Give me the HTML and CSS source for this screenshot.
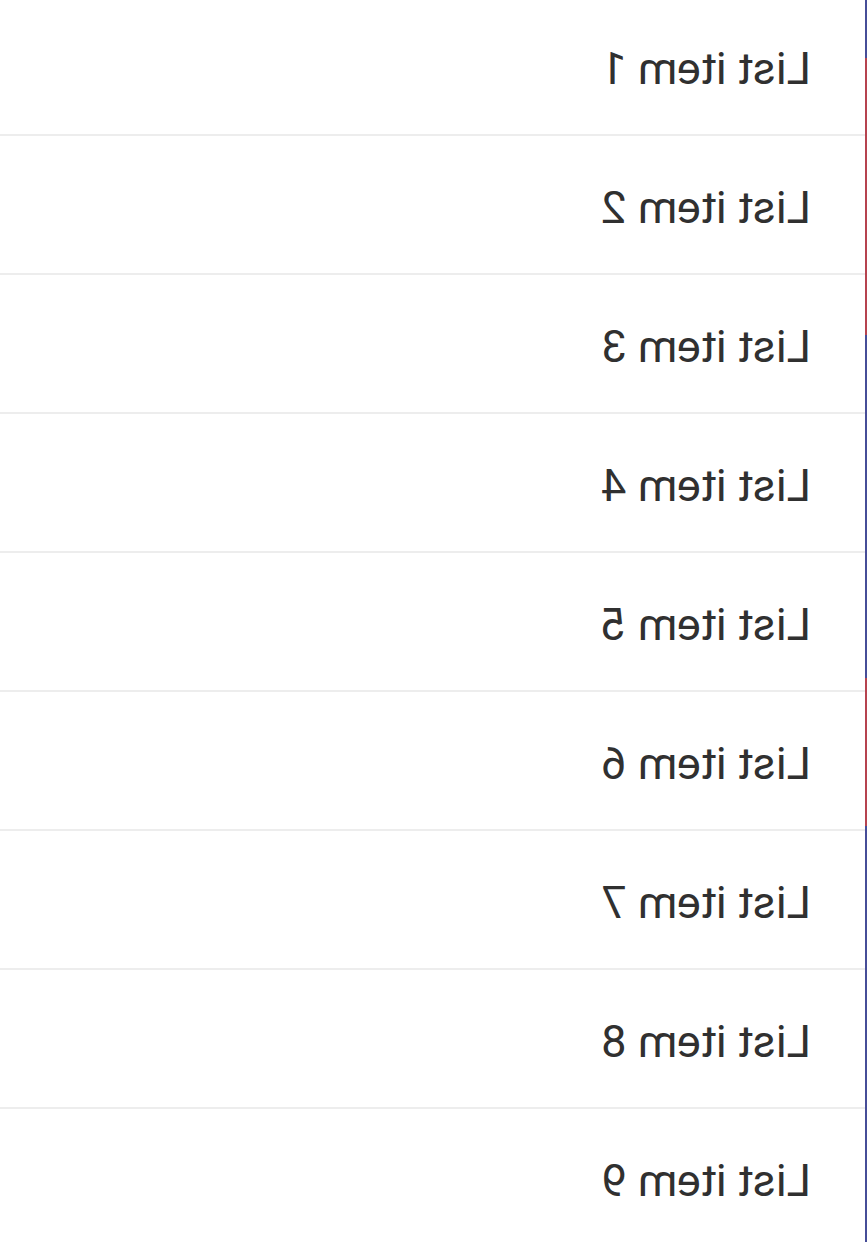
FILE: index.html
```html
<!DOCTYPE html>
<html lang="en">
<head>
<meta charset="utf-8">
<title>List</title>
<link rel="stylesheet" href="styles.css">
</head>
<body>
<div class="screen">
  <div class="rail">
    <div class="seg seg-blue seg-a"></div>
    <div class="seg seg-red seg-b"></div>
    <div class="seg seg-blue seg-c"></div>
    <div class="seg seg-red seg-d"></div>
    <div class="seg seg-blue seg-e"></div>
  </div>
  <ul class="list">
    <li class="item">List item 1</li>
    <li class="item">List item 2</li>
    <li class="item">List item 3</li>
    <li class="item">List item 4</li>
    <li class="item">List item 5</li>
    <li class="item">List item 6</li>
    <li class="item">List item 7</li>
    <li class="item">List item 8</li>
    <li class="item">List item 9</li>
  </ul>
</div>
</body>
</html>
```

FILE: styles.css
```css
html, body {
  margin: 0;
  padding: 0;
  background: #ffffff;
}

.screen {
  width: 867px;
  height: 1242px;
  overflow: hidden;
  display: flex;
  flex-direction: row;
  transform: scaleX(-1);
  background: #ffffff;
}

.rail {
  width: 2px;
  flex: 0 0 2px;
  display: flex;
  flex-direction: column;
}

.seg { flex: 0 0 auto; }
.seg-blue { background: #464d98; }
.seg-red { background: #b6434f; }
.seg-a { height: 58px; }
.seg-b { height: 277px; }
.seg-c { height: 343px; }
.seg-d { height: 148px; }
.seg-e { flex: 1 1 auto; }

.list {
  flex: 1 1 auto;
  list-style: none;
  margin: -3px 0 0 0;
  padding: 0;
}

.item {
  box-sizing: content-box;
  height: 132px;
  padding: 5px 0 0 54px;
  border-bottom: 2px solid #ededed;
  display: flex;
  align-items: center;
  font-family: Roboto, "Liberation Sans", Arial, sans-serif;
  font-size: 45px;
  color: #303030;
}
```
